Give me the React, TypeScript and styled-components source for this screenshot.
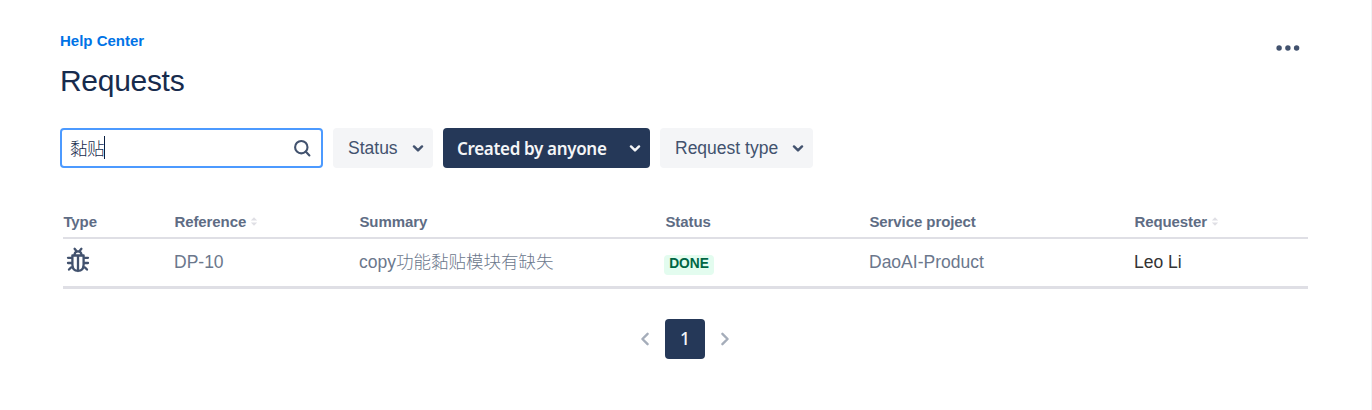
import React from "react";
import styled, { createGlobalStyle } from "styled-components";

const Global = createGlobalStyle`
  *, *::before, *::after { box-sizing: border-box; }
  body {
    margin: 0;
    background: #fff;
    color: #172b4d;
    font: 17.5px/25px "Liberation Sans", "Noto Sans CJK SC", sans-serif;
  }
`;

const Page = styled.main`
  height: 410px;
  padding: 30px 63px 0 60px;
  border-right: 1px solid #f1f2f4;
`;

const Header = styled.header`
  display: flex;
  justify-content: space-between;
  height: 98px;
  padding-right: 7px;
`;

const Breadcrumb = styled.a`
  display: block;
  height: 22px;
  font-size: 15px;
  line-height: 22px;
  font-weight: 700;
  color: #0073e6;
`;

const Title = styled.h1`
  margin: 11px 0 0;
  font-size: 30px;
  line-height: 35px;
  font-weight: 400;
  letter-spacing: -0.3px;
`;

const MoreButton = styled.button`
  width: 26px;
  height: 36px;
  padding: 0;
  border: 0;
  background: none;
`;

const Filters = styled.div`
  display: flex;
  gap: 10px;
  height: 40px;
`;

const SearchBox = styled.div`
  display: flex;
  align-items: center;
  justify-content: space-between;
  width: 263px;
  padding: 0 10px 0 8px;
  border: 2px solid #4c9aff;
  border-radius: 4px;
`;

const Query = styled.span`
  height: 23px;
  margin-bottom: 1px;
  line-height: 23px;
  border-right: 1px solid #091e42;
  font-family: "Noto Sans CJK SC", sans-serif;
  font-weight: 300;
  letter-spacing: -0.4px;
`;

const FilterButton = styled.button<{ $width: number; $active?: boolean }>`
  display: flex;
  align-items: center;
  justify-content: space-between;
  width: ${(p) => p.$width}px;
  height: 40px;
  padding: 0 9px 0 ${(p) => (p.$active ? 14 : 15)}px;
  border: 0;
  border-radius: 4px;
  background: ${(p) => (p.$active ? "#253858" : "#f4f5f7")};
  color: ${(p) => (p.$active ? "#f4f5f7" : "#42526e")};
  font-family: ${(p) => (p.$active ? '"Noto Sans"' : '"Liberation Sans"')}, sans-serif;
  font-size: ${(p) => (p.$active ? 17 : 17.5)}px;
  font-weight: ${(p) => (p.$active ? 600 : 400)};
  letter-spacing: ${(p) => (p.$active ? "-0.33px" : "0")};
  white-space: nowrap;
`;

const Table = styled.table`
  width: 1245px;
  margin: 40px 0 0 3px;
  border-collapse: separate;
  border-spacing: 0;
  table-layout: fixed;
`;

const HeadCell = styled.th<{ $width: number }>`
  width: ${(p) => p.$width}px;
  height: 31px;
  padding: 0 0 2px 0.4px;
  border-bottom: 2px solid #dfdfe5;
  color: #5e6c84;
  font-size: 15px;
  letter-spacing: -0.08px;
  line-height: 20px;
  text-align: left;
  vertical-align: middle;
`;

const Cell = styled.td<{ $dark?: boolean }>`
  height: 50px;
  padding: 0;
  border-bottom: 3px solid #dfdfe5;
  color: ${(p) => (p.$dark ? "#333" : "#6b778c")};
  font-weight: 400;
  vertical-align: middle;
  white-space: nowrap;
`;

const Cjk = styled.span`
  font-family: "Noto Sans CJK SC", sans-serif;
  font-weight: 300;
  line-height: 1;
`;

const Lozenge = styled.span`
  display: block;
  width: 50px;
  height: 20px;
  margin: 5px 0 0 -1px;
  border-radius: 4px;
  background: #e3fcef;
  color: #006644;
  font-size: 13.75px;
  line-height: 17px;
  font-weight: 700;
  text-align: center;
`;

const SortMark = styled.svg`
  margin-left: 3.6px;
  vertical-align: 1px;
`;

const TypeIcon = styled.svg`
  display: block;
  margin: 0 0 6px 3px;
`;

const Pagination = styled.nav`
  display: flex;
  justify-content: center;
  align-items: center;
  width: 1250px;
  margin-top: 30px;
  gap: 14px;
`;

const CurrentPage = styled.span`
  width: 40px;
  height: 40px;
  border-radius: 4px;
  background: #253858;
  color: #f4f5f7;
  font: 500 17.5px/39px "Noto Sans", sans-serif;
  text-align: center;
`;

const Chevron = () => (
  <svg width="12" height="8" viewBox="0 0 12 8" fill="none" stroke="currentColor" strokeWidth="2.4" strokeLinecap="round" strokeLinejoin="round">
    <path d="M2 2.4 6 6.4 10 2.4" />
  </svg>
);

const Sort = () => (
  <SortMark width="8" height="9" viewBox="0 0 8 9" fill="#dfdfe5">
    <path d="M.8 3.6 4 .3 7.2 3.6ZM.8 5.4 4 8.7 7.2 5.4Z" />
  </SortMark>
);

const Arrow = ({ d }: { d: string }) => (
  <svg width="12" height="16" viewBox="0 0 12 16" fill="none" stroke="#a5adba" strokeWidth="2.4" strokeLinecap="round" strokeLinejoin="round">
    <path d={d} />
  </svg>
);

const Bug = () => (
  <TypeIcon width="24" height="26" viewBox="0 0 24 26" fill="none" stroke="#42526e" strokeWidth="2.3" strokeLinecap="round" strokeLinejoin="round">
    <path d="M8.6 1.8 10.2 3.8M15.4 1.8 13.8 3.8M8.6 8V7.2Q9 4.3 12 4.3T15.4 7.2V8" />
    <path d="M6.4 8.5H17.6V17.5C17.6 21.7 15.3 23.9 12 23.9S6.4 21.7 6.4 17.5ZM12 9V24" />
    <path d="M2 10.8H6M22 10.8H18M2 16H6M18 16H22M6.8 20.4H5L3 22.6M17.2 20.4H19L21 22.6" />
  </TypeIcon>
);

const columns = [
  { name: "Type", width: 111 },
  { name: "Reference", width: 185, sortable: true },
  { name: "Summary", width: 306 },
  { name: "Status", width: 204 },
  { name: "Service project", width: 265 },
  { name: "Requester", width: 174, sortable: true },
];

export default function App() {
  return (
    <>
      <Global />
      <Page>
        <Header>
          <div>
            <Breadcrumb>Help Center</Breadcrumb>
            <Title>Requests</Title>
          </div>
          <MoreButton aria-label="More actions">
            <svg width="26" height="36" viewBox="0 0 26 36" fill="#42526e">
              <circle cx="4.1" cy="18" r="2.7" />
              <circle cx="12.9" cy="18" r="2.7" />
              <circle cx="21.6" cy="18" r="2.7" />
            </svg>
          </MoreButton>
        </Header>

        <Filters>
          <SearchBox>
            <Query>黏贴</Query>
            <svg width="18" height="18" viewBox="0 0 18 18" fill="none" stroke="#42526e" strokeWidth="2.1" strokeLinecap="round">
              <circle cx="8.3" cy="8.2" r="6.2" />
              <path d="M12.9 12.8 16.4 16.4" />
            </svg>
          </SearchBox>
          <FilterButton $width={100}>Status <Chevron /></FilterButton>
          <FilterButton $width={207} $active>Created by anyone <Chevron /></FilterButton>
          <FilterButton $width={153}>Request type <Chevron /></FilterButton>
        </Filters>

        <Table>
          <thead>
            <tr>
              {columns.map((c) => (
                <HeadCell key={c.name} $width={c.width}>{c.name}{c.sortable && <Sort />}</HeadCell>
              ))}
            </tr>
          </thead>
          <tbody>
            <tr>
              <Cell><Bug /></Cell>
              <Cell>DP-10</Cell>
              <Cell>copy<Cjk>功能黏贴模块有缺失</Cjk></Cell>
              <Cell><Lozenge>DONE</Lozenge></Cell>
              <Cell>DaoAI-Product</Cell>
              <Cell $dark>Leo Li</Cell>
            </tr>
          </tbody>
        </Table>

        <Pagination>
          <Arrow d="M8.6 2.8 3.4 8 8.6 13.2" />
          <CurrentPage>1</CurrentPage>
          <Arrow d="M3.4 2.8 8.6 8 3.4 13.2" />
        </Pagination>
      </Page>
    </>
  );
}
